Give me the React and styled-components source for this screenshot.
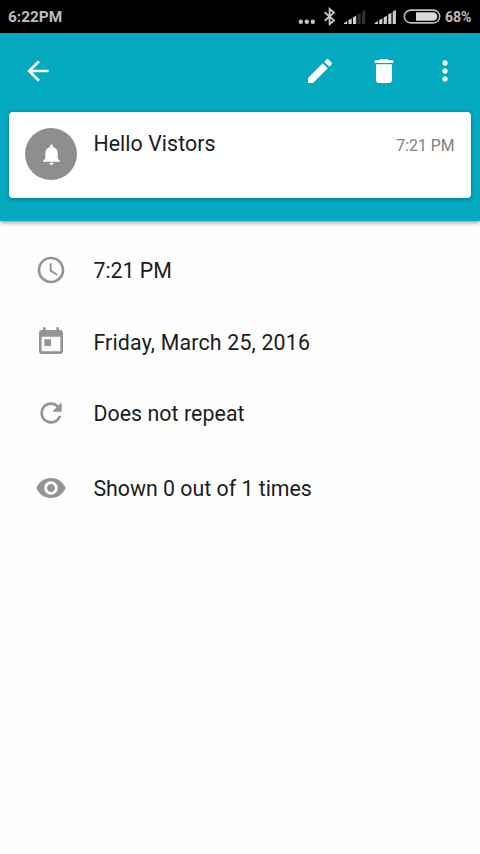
import React from "react";
import styled, { createGlobalStyle } from "styled-components";

const GlobalStyle = createGlobalStyle`
  * { box-sizing: border-box; }
  body {
    margin: 0;
    background: #fefefe;
    font-family: Roboto, sans-serif;
    color: #1c1c1c;
  }
`;

const Screen = styled.div`
  width: 480px;
  height: 854px;
  display: flex;
  flex-direction: column;
  overflow: hidden;
  background: #fefefe;
`;

const StatusBar = styled.div`
  height: 33px;
  flex: none;
  display: flex;
  align-items: center;
  justify-content: space-between;
  padding: 1px 8.5px 0 8px;
  background: #000;
  color: #bdbdbd;
`;

const StatusText = styled.span`
  font-size: ${(p) => p.$size}px;
  font-weight: 700;
  line-height: 20px;
  white-space: nowrap;
`;

const StatusGroup = styled.div`
  display: flex;
  align-items: center;
`;

const StatusGlyphs = styled.svg`
  width: 144px;
  height: 20px;
  display: block;
  margin-right: 2.9px;
`;

const Header = styled.header`
  height: 187.5px;
  flex: none;
  background: #03a9bf;
  box-shadow: 0 1px 5px rgba(0, 0, 0, 0.5);
`;

const Toolbar = styled.div`
  height: 79px;
  display: flex;
  align-items: center;
  padding: 0 19.5px 4px 21.6px;
`;

const IconButton = styled.button`
  display: flex;
  padding: 0;
  border: 0;
  background: none;
  color: #fff;
  margin-left: ${(p) => p.$before || "0"};
`;

const Icon = styled.svg`
  width: ${(p) => p.$size || 32}px;
  height: ${(p) => p.$size || 32}px;
  display: block;
  flex: none;
  fill: currentColor;
`;

const Card = styled.section`
  height: 86px;
  margin: 0 9.5px 0 9.4px;
  padding: 16px;
  display: flex;
  align-items: flex-start;
  background: #fff;
  border-radius: 4px;
  box-shadow: 0 1px 4px rgba(0, 0, 0, 0.35);
`;

const Avatar = styled.div`
  width: 52px;
  height: 52px;
  flex: none;
  display: flex;
  align-items: center;
  justify-content: center;
  border-radius: 50%;
  background: #8e8e8e;
  color: #fff;
`;

const CardTitle = styled.h1`
  margin: 2px 0 0 16px;
  flex: 1;
  font-size: 21.33px;
  font-weight: 400;
  line-height: 28px;
  letter-spacing: 0.07px;
`;

const CardTime = styled.time`
  margin-top: 6px;
  font-size: 15.8px;
  line-height: 24px;
  color: #808080;
`;

const Details = styled.ul`
  margin: 0;
  padding: 33.5px 0 0 34.6px;
  list-style: none;
`;

const DetailRow = styled.li`
  height: ${(p) => p.$height}px;
  display: flex;
  align-items: flex-start;
  color: #949494;
`;

const DetailText = styled.span`
  margin-left: 26.8px;
  font-size: 21.33px;
  line-height: 34px;
  letter-spacing: ${(p) => p.$tracking || 0}px;
  color: #1c1c1c;
  white-space: nowrap;
`;

const PATHS = {
  back: "M20 11H7.83l5.59-5.59L12 4l-8 8 8 8 1.41-1.41L7.83 13H20v-2z",
  edit: "M3 17.25V21h3.75L17.81 9.94l-3.75-3.75L3 17.25zM20.71 7.04c.39-.39.39-1.02 0-1.41l-2.34-2.34c-.39-.39-1.02-.39-1.41 0l-1.83 1.83 3.75 3.75 1.83-1.83z",
  trash: "M6 19c0 1.1.9 2 2 2h8c1.1 0 2-.9 2-2V7H6v12zM19 4h-3.5l-1-1h-5l-1 1H5v2h14V4z",
  more: "M12 8c1.1 0 2-.9 2-2s-.9-2-2-2-2 .9-2 2 .9 2 2 2zm0 2c-1.1 0-2 .9-2 2s.9 2 2 2 2-.9 2-2-.9-2-2-2zm0 6c-1.1 0-2 .9-2 2s.9 2 2 2 2-.9 2-2-.9-2-2-2z",
  bell: "M12 22c1.1 0 2-.9 2-2h-4c0 1.1.89 2 2 2zm6-6v-5c0-3.07-1.64-5.64-4.5-6.32V4c0-.83-.67-1.5-1.5-1.5s-1.5.67-1.5 1.5v.68C7.63 5.36 6 7.92 6 11v5l-2 2v1h16v-1l-2-2z",
  clock: "M11.99 2C6.47 2 2 6.48 2 12s4.47 10 9.99 10C17.52 22 22 17.52 22 12S17.52 2 11.99 2zM12 20c-4.42 0-8-3.58-8-8s3.58-8 8-8 8 3.58 8 8-3.58 8-8 8zM12.5 7H11v6l5.25 3.15.75-1.23-4.5-2.67z",
  today: "M19 3h-1V1h-2v2H8V1H6v2H5c-1.11 0-1.99.9-1.99 2L3 19c0 1.1.89 2 2 2h14c1.1 0 2-.9 2-2V5c0-1.1-.9-2-2-2zm0 16H5V8h14v11zM7 10h5v5H7z",
  repeat: "M17.65 6.35C16.2 4.9 14.21 4 12 4c-4.42 0-7.99 3.58-7.99 8s3.57 8 7.99 8c3.73 0 6.84-2.55 7.73-6h-2.08c-.82 2.33-3.04 4-5.65 4-3.31 0-6-2.69-6-6s2.69-6 6-6c1.66 0 3.14.69 4.22 1.78L13 11h7V4l-2.35 2.35z",
  eye: "M12 4.5C7 4.5 2.73 7.61 1 12c1.73 4.39 6 7.5 11 7.5s9.27-3.11 11-7.5c-1.73-4.39-6-7.5-11-7.5zM12 17c-2.76 0-5-2.24-5-5s2.24-5 5-5 5 2.24 5 5-2.24 5-5 5zm0-8c-1.66 0-3 1.34-3 3s1.34 3 3 3 3-1.34 3-3-1.34-3-3-3z",
};

function Glyph({ name, size }) {
  return (
    <Icon $size={size} viewBox="0 0 24 24" aria-hidden="true">
      <path d={PATHS[name]} />
    </Icon>
  );
}

// Each bar has a sloped top, so together they form a rising wedge.
function Signal({ x, active }) {
  return [0, 1, 2, 3, 4].map((i) => {
    const left = x + i * 4.5;
    const low = 16 - i * 2.8;
    return (
      <path
        key={i}
        d={`M${left} 17V${low}L${left + 3.2} ${low - 2}V17Z`}
        fill={i < active ? "#cfcfcf" : "#303030"}
      />
    );
  });
}

function StatusIcons() {
  return (
    <StatusGlyphs viewBox="0 0 144 20" aria-hidden="true">
      <g fill="#c4c4c4">
        <circle cx="2.8" cy="14.8" r="2.2" />
        <circle cx="8.8" cy="14.8" r="2.2" />
        <circle cx="14.8" cy="14.8" r="2.2" />
      </g>
      <path
        d="M26.6 5.3L36 13.4L31.6 17V2L36 5.6L26.6 13.7"
        fill="none"
        stroke="#c8c8c8"
        strokeWidth="1.8"
      />
      <Signal x={46} active={3} />
      <Signal x={76.7} active={5} />
      <rect x="106.3" y="3.1" width="35.4" height="12.8" rx="6.4" fill="none" stroke="#bcbcbc" strokeWidth="1.6" />
      <path d="M118 5.2H135A4.3 4.3 0 0 1 135 13.8H118Z" fill="#d8d8d8" />
    </StatusGlyphs>
  );
}

const DETAILS = [
  { icon: "clock", text: "7:21 PM", height: 72 },
  { icon: "today", text: "Friday, March 25, 2016", height: 71, tracking: 0.18 },
  { icon: "repeat", text: "Does not repeat", height: 75, tracking: 0.07 },
  { icon: "eye", text: "Shown 0 out of 1 times", height: 72 },
];

export default function App() {
  return (
    <Screen>
      <GlobalStyle />
      <StatusBar>
        <StatusText $size={15.4}>6:22PM</StatusText>
        <StatusGroup>
          <StatusIcons />
          <StatusText $size={14.1}>68%</StatusText>
        </StatusGroup>
      </StatusBar>
      <Header>
        <Toolbar>
          <IconButton aria-label="Back"><Glyph name="back" /></IconButton>
          <IconButton aria-label="Edit" $before="auto"><Glyph name="edit" /></IconButton>
          <IconButton aria-label="Delete" $before="32px"><Glyph name="trash" /></IconButton>
          <IconButton aria-label="More" $before="28.5px"><Glyph name="more" /></IconButton>
        </Toolbar>
        <Card>
          <Avatar><Glyph name="bell" size={25} /></Avatar>
          <CardTitle>Hello Vistors</CardTitle>
          <CardTime>7:21 PM</CardTime>
        </Card>
      </Header>
      <Details>
        {DETAILS.map((d) => (
          <DetailRow key={d.icon} $height={d.height}>
            <Glyph name={d.icon} />
            <DetailText $tracking={d.tracking}>{d.text}</DetailText>
          </DetailRow>
        ))}
      </Details>
    </Screen>
  );
}
